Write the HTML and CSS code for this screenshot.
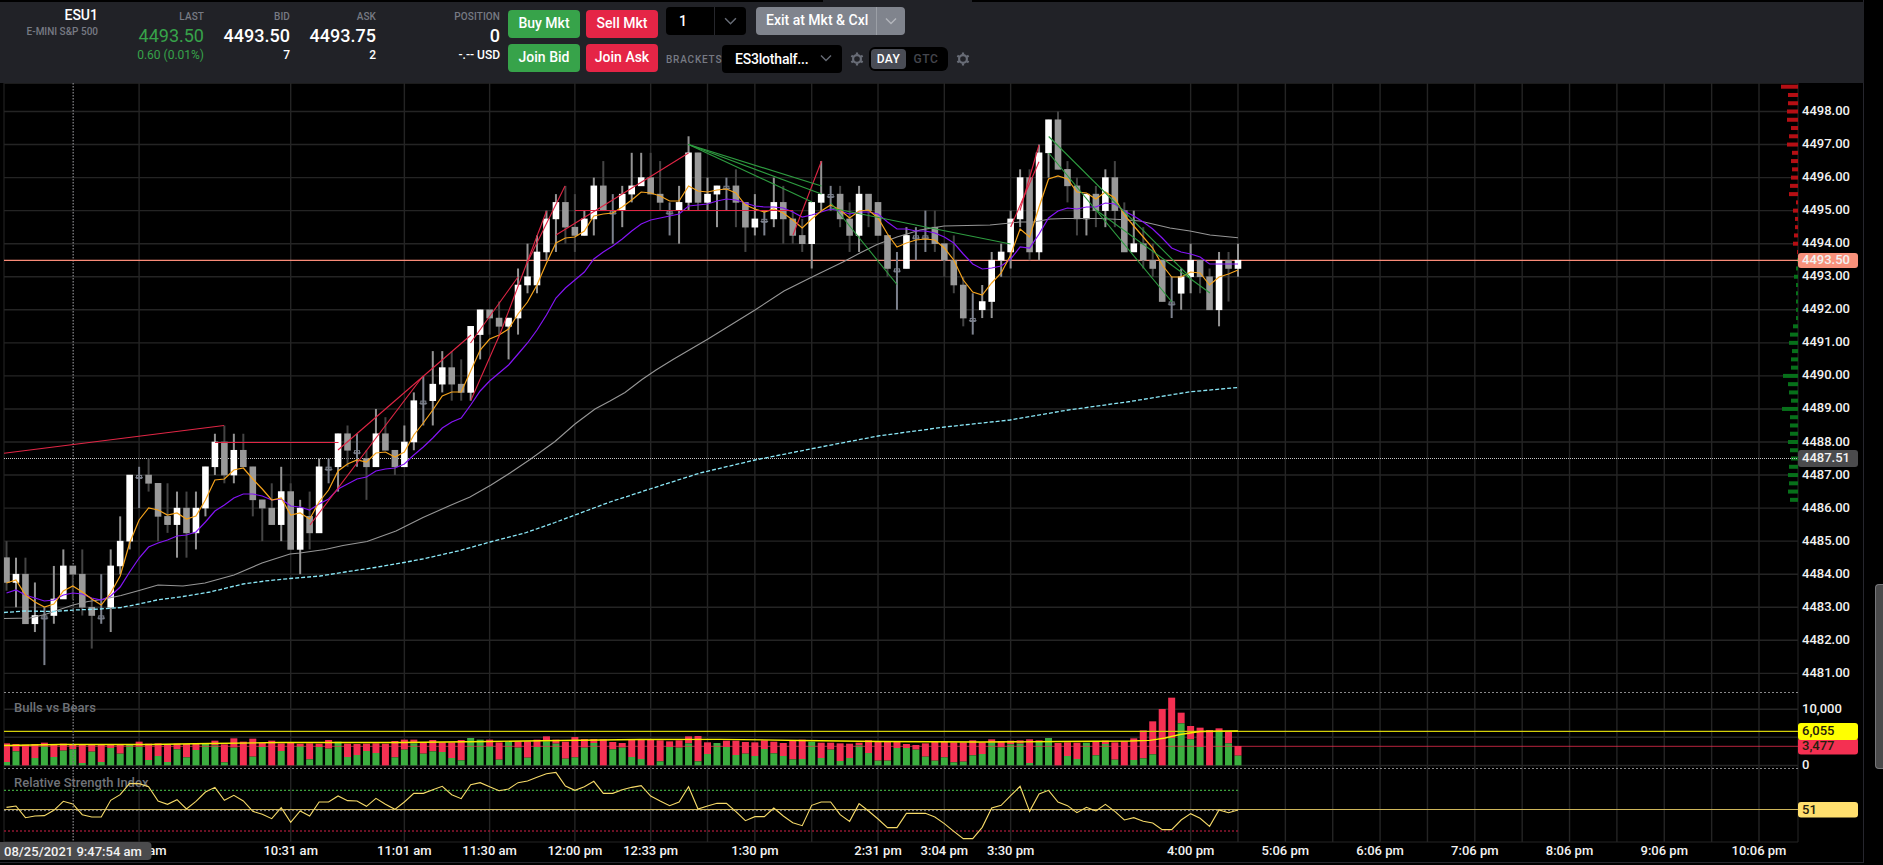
FILE: index.html
```html
<!DOCTYPE html>
<html lang="en">
<head>
  <meta charset="UTF-8">
  <meta name="viewport" content="width=device-width, initial-scale=1.0">
  <title>ESU1 Chart</title>
  <link rel="stylesheet" href="styles.css">
</head>
<body>

  <div class="window">
    <div class="handle"></div>
    <header class="toolbar">
      <div class="quote symbol">
        <h1>ESU1</h1>
        <p>E-MINI S&amp;P 500</p>
      </div>
      <div class="quote last">
        <span class="label">LAST</span>
        <span class="price">4493.50</span>
        <span class="detail">0.60 (0.01%)</span>
      </div>
      <div class="quote">
        <span class="label">BID</span>
        <span class="price">4493.50</span>
        <span class="detail">7</span>
      </div>
      <div class="quote">
        <span class="label">ASK</span>
        <span class="price">4493.75</span>
        <span class="detail">2</span>
      </div>
      <div class="quote position">
        <span class="label">POSITION</span>
        <span class="price">0</span>
        <span class="detail">-.-- USD</span>
      </div>

      <div class="orders">
        <button class="btn buy">Buy Mkt</button>
        <button class="btn sell">Sell Mkt</button>
        <button class="btn buy">Join Bid</button>
        <button class="btn sell">Join Ask</button>
      </div>

      <div class="controls">
        <div class="row">
          <div class="split qty">
            <span>1</span>
            <svg class="chevron" viewBox="0 0 12 8"><path d="M1 1.5l5 5 5-5"/></svg>
          </div>
          <div class="split exit">
            <span>Exit at Mkt &amp; Cxl</span>
            <svg class="chevron" viewBox="0 0 12 8"><path d="M1 1.5l5 5 5-5"/></svg>
          </div>
        </div>
        <div class="row">
          <span class="label brackets">BRACKETS</span>
          <div class="select">
            <span>ES3lothalf...</span>
            <svg class="chevron" viewBox="0 0 12 8"><path d="M1 1.5l5 5 5-5"/></svg>
          </div>
          <svg class="gear" viewBox="0 0 14 14"><circle cx="7" cy="7" r="3.9"/><path d="M7 .4v2.2M7 11.4v2.2M1.3 3.7l1.9 1.1M10.8 9.2l1.9 1.1M1.3 10.3l1.9-1.1M10.8 4.8l1.9-1.1"/></svg>
          <div class="toggle">
            <span class="active">DAY</span>
            <span>GTC</span>
          </div>
          <svg class="gear" viewBox="0 0 14 14"><circle cx="7" cy="7" r="3.9"/><path d="M7 .4v2.2M7 11.4v2.2M1.3 3.7l1.9 1.1M10.8 9.2l1.9 1.1M1.3 10.3l1.9-1.1M10.8 4.8l1.9-1.1"/></svg>
        </div>
      </div>
    </header>

    <svg class="chart" id="chart" viewBox="0 83 1863 779" width="1863" height="779"></svg>
  </div>

  <aside class="gutter">
    <div class="scrollbar"></div>
  </aside>

  <script src="chart.js"></script>
</body>
</html>
```

FILE: styles.css
```css
* {
  box-sizing: border-box;
  margin: 0;
  padding: 0;
}

body {
  display: flex;
  height: 865px;
  overflow: hidden;
  background: #000;
  color: #fff;
  font-family: Roboto, Arial, sans-serif;
  font-size: 13px;
}

.window {
  width: 1864px;
  height: 863px;
  border-right: 1px solid #26262d;
  border-bottom: 1px solid #26262d;
}

.handle {
  width: 149px;
  height: 2px;
  margin-left: 823px;
  background: #212227;
}

.toolbar {
  display: flex;
  width: 1864px;
  height: 81px;
  background: #212227;
}

.quote {
  display: flex;
  flex-direction: column;
  align-items: flex-end;
  width: 86px;
  padding-top: 8px;
  white-space: nowrap;
}

.quote.symbol {
  width: 98px;
  padding-top: 4px;
}

.quote.last {
  width: 106px;
  color: #37a34a;
}

.quote.position {
  width: 124px;
}

.symbol h1 {
  font-size: 14px;
  font-weight: 500;
  line-height: 18px;
}

.symbol p {
  margin-top: 1px;
  color: #777a83;
  font-size: 10px;
  font-weight: 500;
  line-height: 14px;
}

.label {
  color: #777a83;
  font-size: 10px;
  font-weight: 500;
  line-height: 13px;
  letter-spacing: 0.1px;
}

.price {
  margin-top: 2px;
  font-size: 18px;
  font-weight: 500;
  line-height: 22px;
}

.last .price,
.last .detail {
  font-weight: 400;
}

.detail {
  font-size: 12px;
  font-weight: 500;
  line-height: 16px;
}

.orders {
  display: grid;
  grid-template-columns: 72px 72px;
  grid-template-rows: 28px 28px;
  gap: 6px;
  margin: 8px 0 0 8px;
}

.btn {
  border: none;
  border-radius: 4px;
  color: #fff;
  font-family: inherit;
  font-size: 14px;
  font-weight: 500;
  padding-bottom: 2px;
  white-space: nowrap;
}

.buy {
  background: #37a34a;
}

.sell {
  background: #e52546;
}

.controls {
  display: flex;
  flex-direction: column;
  gap: 10px;
  margin: 5px 0 0 8px;
}

.row {
  display: flex;
  align-items: center;
  height: 28px;
}

.split {
  display: flex;
  height: 28px;
  border-radius: 4px;
  font-size: 14px;
  font-weight: 500;
  overflow: hidden;
}

.split span {
  flex: 1;
  line-height: 28px;
  white-space: nowrap;
}

.split .chevron {
  width: 32px;
  height: 28px;
  padding: 9px;
}

.qty {
  width: 80px;
  background: #000;
}

.qty span {
  padding-left: 13px;
}

.qty .chevron {
  border-left: 1px solid #26272c;
}

.exit {
  width: 149px;
  margin-left: 10px;
  background: #80848d;
}

.exit span {
  padding-left: 10px;
  line-height: 27px;
}

.exit .chevron {
  width: 29px;
  padding: 8px;
  border-left: 1px solid #9b9fa6;
}

.chevron path {
  fill: none;
  stroke: #666b75;
  stroke-width: 1.4;
}

.exit .chevron path {
  stroke: #b3b6bc;
}

.brackets {
  width: 56px;
  letter-spacing: 0.8px;
}

.select {
  display: flex;
  align-items: center;
  justify-content: space-between;
  width: 120px;
  height: 28px;
  padding: 0 10px 0 13px;
  border-radius: 4px;
  background: #000;
  font-size: 14px;
  font-weight: 500;
  letter-spacing: -0.2px;
}

.select .chevron {
  width: 12px;
  height: 8px;
  margin-bottom: 2px;
}

.gear {
  width: 14px;
  height: 14px;
  margin-left: 8px;
}

.gear circle,
.gear path {
  fill: none;
  stroke: #686c76;
  stroke-width: 2.2;
}

.gear + .toggle {
  margin-left: 5px;
}

.toggle {
  display: flex;
  width: 79px;
  height: 24px;
  padding: 2px;
  border-radius: 6px;
  background: #000;
  font-size: 12px;
  font-weight: 500;
  line-height: 20px;
  text-align: center;
}

.toggle span {
  flex: 1;
  color: #44464d;
  letter-spacing: 0.6px;
}

.toggle .active {
  flex: 0 0 35px;
  border-radius: 4px;
  background: #494c55;
  color: #fff;
  letter-spacing: 0.4px;
}

.chart {
  display: block;
}

.chart text {
  fill: #f2f2f2;
  font-size: 13px;
  font-weight: 500;
}

.chart .time {
  text-anchor: middle;
}

.chart .dark {
  fill: #26200c;
}

.chart .title {
  fill: #6f7278;
}

.gutter {
  display: flex;
  flex: 1;
  justify-content: flex-end;
  align-items: flex-start;
  padding-top: 584px;
}

.scrollbar {
  width: 8px;
  height: 185px;
  border: 1px solid #77777a;
  border-right: none;
  border-radius: 4px 0 0 4px;
  background: #4a4a4b;
}
```

FILE: chart.js
```js
const chart = document.getElementById('chart');
const LEFT = 4;
const RIGHT = 1798;
const TICK = 8.2625; // height of one 0.25 price tick
const barX = i => 6.5 + 9.473 * i;
const tickY = t => 111.5 + t * TICK; // ticks below 4498.00

function add(tag, attrs, text) {
  const el = document.createElementNS('http://www.w3.org/2000/svg', tag);
  for (const key in attrs) el.setAttribute(key, attrs[key]);
  if (text) el.textContent = text;
  chart.appendChild(el);
}

function line(x1, y1, x2, y2, stroke, extra) {
  add('line', { x1, y1, x2, y2, stroke, ...extra });
}

function box(x, y, width, height, fill, extra) {
  add('rect', { x, y, width, height, fill, ...extra });
}

function poly(points, stroke, extra) {
  add('polyline', { points: points.join(' '), fill: 'none', stroke, ...extra });
}

// high, body top, body bottom, low (in ticks), w = up, g = down, d = doji
const candles = `52 54 57 58 g|54 56 57 60 w|54 56 62 62 g|57 61 62 63 w|60 61 61 67 d|55 59 61 62 w|53 55 59 59 w|55 55 56 59 g|53 56 60 61 g|59 60 61 65 g
56 61 61 62 d|53 55 60 63 w|49 52 55 56 w|44 44 52 53 w|43 44 44 48 d|42 44 45 46 g|45 45 49 52 g|45 49 50 51 g|46 48 50 54 w|46 48 51 54 g
46 48 51 53 w|43 43 48 49 w|39 40 43 44 w|38 40 44 45 g|39 41 44 45 w|39 41 43 43 g|43 43 47 49 g|47 47 48 52 g|45 48 50 50 g|43 46 50 52 w
45 46 53 53 g|47 48 53 56 w|46 49 51 53 g|42 43 51 51 w|42 43 43 45 d|39 39 43 46 w|38 39 41 43 g|39 41 41 43 d|41 42 43 47 g|36 39 43 43 w
37 39 41 41 g|41 41 43 44 g|38 40 43 43 w|34 35 40 41 w|32 35 35 38 d|29 33 35 38 w|29 31 33 34 w|29 31 33 35 g|30 33 34 35 g|26 26 34 35 w
24 24 27 30 w|24 24 25 27 g|23 25 26 27 g|25 25 26 30 w|19 21 25 27 w|16 20 21 22 w|15 17 21 22 w|12 13 17 18 w|10 11 13 17 w|9 11 14 16 g
10 14 15 17 g|12 13 15 15 w|8 9 13 15 w|6 9 12 12 g|10 12 12 16 d|9 10 12 14 w|5 9 10 11 w|5 8 9 9 w|5 8 10 10 g|6 10 11 12 g
11 12 12 15 d|9 11 12 16 w|3 5 11 12 w|5 5 11 12 g|8 10 11 12 w|9 9 10 14 w|8 9 9 12 d|7 9 11 14 g|11 11 14 17 g|10 13 14 15 w
12 13 13 15 d|8 11 13 14 w|9 11 13 16 g|12 13 15 16 g|13 15 16 17 g|11 11 16 19 w|6 10 11 12 w|9 10 10 12 d|9 10 13 14 g|11 13 15 17 g
9 10 15 17 w|10 10 12 14 g|11 11 15 15 g|15 15 19 20 g|17 19 19 24 d|14 15 19 19 w|14 15 15 18 d|12 15 15 17 d|12 14 16 17 g|16 16 18 20 g
15 18 21 22 g|20 21 25 26 g|22 25 25 27 d|21 23 24 25 w|17 18 23 25 w|16 17 18 20 w|12 13 17 19 w|7 8 13 14 w|7 8 17 18 g|4 5 17 18 w
1 1 5 8 w|0 1 7 7 g|6 7 9 11 g|8 9 13 15 g|10 10 13 15 w|9 10 12 14 g|7 8 12 14 w|6 8 12 14 g|11 12 17 17 g|12 16 17 17 w
14 16 18 19 g|16 18 19 20 g|18 18 23 23 g|20 23 23 25 d|19 20 22 24 w|16 18 20 22 w|18 18 20 22 g|19 20 24 24 g|17 18 24 26 w|17 18 19 23 g
16 18 19 20 w`.split(/[|\n]/).map(row => row.split(' '));

// 9 period, one y per bar
const fast = [583, 580, 595, 602, 607, 604, 591, 586, 592, 599, 605, 593, 576, 543, 520, 508, 510, 515, 513, 519,
  516, 500, 480, 479, 470, 468, 479, 489, 500, 498, 515, 513, 519, 502, 490, 471, 464, 460, 462, 453,
  452, 457, 452, 435, 423, 410, 396, 392, 392, 371, 350, 339, 335, 329, 314, 302, 285, 263, 243, 238,
  237, 231, 216, 214, 213, 207, 200, 192, 193, 196, 201, 201, 186, 191, 192, 190, 189, 193, 205, 209,
  212, 209, 213, 220, 228, 219, 211, 205, 210, 218, 211, 210, 218, 234, 247, 243, 240, 239, 240, 248,
  260, 280, 292, 295, 283, 273, 255, 229, 237, 207, 179, 176, 179, 192, 193, 199, 192, 198, 215, 226,
  237, 248, 265, 277, 277, 272, 273, 285, 277, 274, 270];

// 20 period, one y per bar
const medium = [593, 590, 595, 598, 601, 600, 595, 593, 594, 598, 600, 596, 587, 572, 558, 547, 543, 540, 536, 535,
  532, 522, 511, 505, 498, 494, 494, 496, 500, 499, 506, 507, 510, 504, 499, 489, 484, 479, 477, 471,
  469, 468, 464, 455, 447, 438, 428, 422, 418, 405, 391, 381, 373, 365, 354, 343, 330, 315, 298, 288,
  280, 272, 259, 252, 246, 239, 231, 224, 220, 218, 216, 214, 206, 205, 204, 201, 199, 200, 203, 206,
  207, 207, 208, 212, 217, 215, 212, 209, 211, 214, 212, 212, 214, 222, 229, 229, 231, 231, 233, 237,
  243, 254, 264, 269, 268, 266, 259, 247, 248, 234, 218, 211, 208, 209, 207, 207, 203, 204, 211, 216,
  222, 229, 238, 248, 252, 254, 257, 264, 264, 264, 264];

const slow = ['4,618.5 30,618 45,614.5 73,605 88,601.5 102,599.5 121,595.5 140,590.3 158,585 183,586 205,583 234,575',
  '262,563 290,554 300,553 325,549.5 343,545.5 367,541.5 396,531 423,517.5 450,505.5 470,497 491,485 510,473',
  '530,459.5 555,441.5 575,424 595,409 610,401 625,392.5 642,379.5 656,370 673,359.5 708,339 755,310 784,291 812,277 843,262 860,253 877,244.5',
  '897,237 920,230 944,226 990,225 1020,222 1034,222 1050,219 1065,218.5 1100,218.5 1120,219.5 1140,221',
  '1170,228 1190,231 1210,235 1238,237.7'];

const vwap = ['4,612.5 25,611 53,611.5 75,610 100,609 121,607.5 139,604 157,600 183,596.5 210,592 243,584 265,581',
  '290,578.5 320,576 345,572 375,567.5 404,562.5 425,558.5 460,550.5 490,542 525,533 555,522.5 575,515 610,502',
  '650,489 700,473 755,460 812,448.7 878,436 945,427 1010,420 1065,410.5 1130,401.5 1190,391.8 1238,387.5'];

// total/bulls, distance from the pane top in thirds of a pixel, zero line at 256
const volume = `190/246 192/214 194/256 192/234 188/198 193/231 191/212 194/208 193/249 192/215 193/246 192/204 194/221 194/194
185/200 191/240 190/228 192/246 191/208 192/232 191/210 191/191 182/196 193/247 175/203 185/256 176/230 188/201 182/256
190/213 188/256 191/198 190/238 191/201 180/206 185/185 191/231 192/225 191/213 190/219 191/256 183/232 179/209 179/190
187/221 180/214 187/216 187/234 180/241 174/174 179/179 179/198 187/239 184/184 184/203 184/233 179/201 169/184 179/191
185/236 171/232 177/203 177/189 178/256 186/208 189/203 178/231 177/237 178/256 181/244 184/201 181/203 169/190 168/244
187/222 189/189 182/201 182/225 186/221 187/228 181/207 185/220 189/228 182/238 179/237 185/185 188/234 188/209 190/243
191/234 188/196 181/219 183/242 184/242 184/204 192/204 195/209 190/230 185/242 184/232 187/247 187/245 181/226 187/222
178/188 183/202 182/193 181/191 178/249 181/186 174/174 189/256 187/228 188/237 188/188 183/226 182/192 187/239 184/256
175/240 151/235 124/223 87/256 53/174 98/130 138/178 143/201 150/256 145/155 154/190 198/227`.split(/\s+/);

const rsi = [382, 378, 413, 408, 407, 391, 364, 372, 404, 411, 411, 361, 344, 310, 311, 320, 363, 373, 359, 387,
  364, 336, 322, 361, 346, 363, 394, 403, 416, 383, 427, 393, 408, 366, 366, 348, 362, 363, 379, 355,
  373, 388, 366, 340, 340, 329, 319, 344, 356, 314, 308, 320, 332, 327, 308, 303, 292, 281, 277, 318,
  331, 320, 304, 340, 340, 329, 322, 317, 348, 363, 377, 366, 320, 387, 378, 370, 370, 395, 422, 410,
  410, 384, 408, 428, 437, 376, 366, 366, 404, 424, 371, 393, 417, 443, 443, 400, 400, 400, 411, 431,
  454, 476, 476, 442, 384, 376, 347, 319, 394, 342, 331, 366, 377, 398, 382, 393, 373, 394, 420, 413,
  424, 429, 449, 449, 420, 401, 415, 439, 390, 398, 390];

// resting orders at each tick, from 4498.75 down
const asks = [17, 10, 10, 11, 11, 7, 9, 11, 6, 7, 6, 7, 8, 9, 2, 5, 3, 3, 4, 5, 1];
const bids = [1, 2, 4, 2, 2, 2, 2, 2, 5, 8, 9, 6, 7, 7, 15, 10, 9, 7, 16, 8, 8, 8, 10, 8, 7, 9, 10, 9, 10, 8];

const times = [[30, '10:31 am'], [42, '11:01 am'], [51, '11:30 am'], [60, '12:00 pm'], [68, '12:33 pm'], [74, ''],
  [79, '1:30 pm'], [85, ''], [92, '2:31 pm'], [99, '3:04 pm'], [106, '3:30 pm'], [125, '4:00 pm'], [130, ''],
  [135, '5:06 pm'], [140, ''], [145, '6:06 pm'], [150, ''], [155, '7:06 pm'], [160, ''], [165, '8:06 pm'],
  [170, ''], [175, '9:06 pm'], [180, ''], [185, '10:06 pm']];

// grid
const grid = { 'stroke-width': 1.4 };
line(LEFT, 83, LEFT, 842, '#1c1c1c', grid);
line(RIGHT, 83, RIGHT, 842, '#1c1c1c', grid);
line(LEFT, 83.5, RIGHT, 83.5, '#1c1c1c');
line(LEFT, 842, RIGHT, 842, '#242424');
line(139.1, 83, 139.1, 842, '#242424', grid);
times.forEach(([i, label]) => {
  line(barX(i), 83, barX(i), 842, '#242424', grid);
  add('text', { x: barX(i), y: 855, class: 'time' }, label);
});
add('text', { x: 166.5, y: 855, 'text-anchor': 'end' }, 'am');
for (let p = 0; p < 18; p++) {
  line(LEFT, tickY(p * 4), RIGHT, tickY(p * 4), '#242424', grid);
  add('text', { x: 1802, y: tickY(p * 4) + 3.5 }, (4498 - p) + '.00');
}
line(LEFT, 709.3, RIGHT, 709.3, '#242424', grid);
line(LEFT, 737.3, RIGHT, 737.3, '#242424', grid);
line(LEFT, 765.5, RIGHT, 765.5, '#242424', grid);
add('text', { x: 1802, y: 713 }, '10,000');
add('text', { x: 1802, y: 769 }, '0');
line(LEFT, 692.5, RIGHT, 692.5, '#88888a', { 'stroke-dasharray': '2 2' });
line(LEFT, 768.5, RIGHT, 768.5, '#88888a', { 'stroke-dasharray': '2 2' });

add('text', { x: 14, y: 711.5, class: 'title' }, 'Bulls vs Bears');
add('text', { x: 14, y: 787, class: 'title' }, 'Relative Strength Index');

// order book depth
asks.forEach((w, i) => box(RIGHT - w, tickY(i - 3) - 2, w, 4, '#b50f14'));
bids.forEach((w, i) => box(RIGHT - w, tickY(i + 18) - 2, w, 4, '#07701a'));

// volume
volume.forEach((bar, i) => {
  const [total, bulls] = bar.split('/');
  const x = Math.max(LEFT, barX(i) - 3.5);
  const w = barX(i) + 3.5 - x;
  box(x, 680 + total / 3, w, (bulls - total) / 3, '#f43052');
  box(x, 680 + bulls / 3, w, (256 - bulls) / 3, '#3cae40');
});
line(LEFT, 746.3, RIGHT, 746.3, '#f43052', { opacity: 0.75 });
line(LEFT, 731.4, RIGHT, 731.4, '#d4d00a', { 'stroke-width': 1.3 });
poly(['4,745.5 60,744.5 150,744.5 210,743.5 280,742.5 400,742.5 490,741.5 560,740.5 640,739.5 720,739.3 800,740.5',
  '880,741.5 980,742 1060,741.5 1130,741 1150,740.3 1165,738 1180,734.5 1200,731.5 1238,731'], '#f4ee00', { 'stroke-width': 1.3 });

// rsi
line(LEFT, 790.3, 1238, 790.3, '#3fa33f', { 'stroke-dasharray': '2 2', 'stroke-width': 1.3 });
line(LEFT, 831, 1238, 831, '#8f1730', { 'stroke-dasharray': '2 2', 'stroke-width': 1.3 });
line(LEFT, 810.6, 1238, 810.6, '#8a8a8a', { 'stroke-dasharray': '2 2' });
line(LEFT, 809.5, RIGHT, 809.5, '#cdb55c', { 'stroke-width': 1.2 });
poly(rsi.map((v, i) => [Math.max(LEFT, barX(i)), 680 + v / 3]), '#f5d968', { 'stroke-width': 1.1 });

// crosshair
line(73.2, 83, 73.2, 842, '#77777a', { 'stroke-dasharray': '1.5 1.5', 'stroke-width': 1.4 });
line(LEFT, 458.5, RIGHT, 458.5, '#c8c8c8', { 'stroke-dasharray': '1 1' });

line(LEFT, 260.4, RIGHT, 260.4, '#f98b78', { 'stroke-width': 1.2 });

// candles
candles.forEach(([high, top, bottom, low, type], i) => {
  const x = barX(i);
  const wick = { w: '#949494', g: '#444444', d: '#7c818d' }[type];
  line(x, tickY(+high), x, tickY(+low), wick, { 'stroke-width': 2 });
  if (type === 'd') {
    box(x - 2.5, tickY(+top) + 0.4, 5, 3, 'none', { stroke: '#7c818d' });
    line(x - 3.8, tickY(+top) + 2.6, x + 3.8, tickY(+top) + 2.6, '#7c818d');
  } else {
    const left = Math.max(LEFT, x - 3.3);
    box(left, tickY(+top) - 0.3, x + 3.3 - left, (bottom - top) * TICK + 0.6, type === 'w' ? '#fff' : '#999');
  }
});

// averages
poly(slow, '#969696', { 'stroke-width': 1.1 });
poly(vwap, '#8ae8f8', { 'stroke-width': 1.3, 'stroke-dasharray': '4 2' });
poly(medium.map((y, i) => [Math.max(LEFT, barX(i)), y]), '#8414f5', { 'stroke-width': 1.2 });
poly(fast.map((y, i) => [Math.max(LEFT, barX(i)), y]), '#f5a31c', { 'stroke-width': 1.2 });

// divergences
[[4, 453.3, 224, 425.5], [215, 442.5, 338.5, 442.5], [310, 525, 423, 376], [338, 450, 471, 335], [470.5, 343, 518, 277],
  [471, 400, 500, 334], [500, 334, 546.5, 211], [527, 263, 565, 186], [556, 235, 688.5, 153], [575, 210.5, 793, 210.5],
  [793, 235, 821.5, 161], [1010.7, 227, 1039, 161.7], [1020, 210.5, 1039, 145]
].forEach(d => line(...d, '#e02645', { 'stroke-width': 1.1 }));
[[688.5, 144.5, 821.5, 186], [688.5, 144.5, 821.5, 194], [688.5, 144.5, 812, 202], [831, 203, 897, 284.5],
  [831, 208, 1010.5, 244], [1048.7, 136.5, 1190, 277], [1048.7, 153, 1172, 302], [1096, 210, 1210, 293]
].forEach(d => line(...d, '#2e9c40', { 'stroke-width': 1.1 }));

// axis tags
box(1798, 253, 60, 15, '#f8917b', { rx: 3 });
add('text', { x: 1802, y: 264 }, '4493.50');
box(1798, 450, 60, 17, '#4b4b4d', { rx: 3 });
add('text', { x: 1802, y: 462 }, '4487.51');
box(1798, 738, 60, 16.5, '#f43052', { rx: 3 });
add('text', { x: 1802, y: 750, class: 'dark' }, '3,477');
box(1798, 723, 60, 17, '#ffff00', { rx: 3 });
add('text', { x: 1802, y: 735.3, class: 'dark' }, '6,055');
box(1798, 802, 60, 15.5, '#ffdf6e', { rx: 3 });
add('text', { x: 1802, y: 813.5, class: 'dark' }, '51');
box(-4, 842, 155.5, 18, '#4b4b4d', { rx: 4 });
add('text', { x: 4, y: 856 }, '08/25/2021 9:47:54 am');
```
